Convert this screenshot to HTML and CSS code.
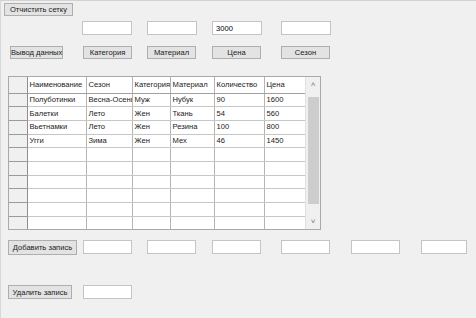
FILE: index.html
```html
<!DOCTYPE html>
<html lang="ru">
<head>
  <meta charset="UTF-8" />
  <title>Обувь</title>
  <link rel="stylesheet" href="styles.css">
</head>
<body>
  <div class="window">

    <div class="row row-clear">
      <button class="btn btn-clear">Отчистить сетку</button>
    </div>

    <div class="row row-filter">
      <input class="field f1" type="text" />
      <input class="field f2" type="text" />
      <input class="field f3" type="text" value="3000" />
      <input class="field f4" type="text" />
    </div>

    <div class="row row-buttons">
      <button class="btn btn-out">Вывод данных</button>
      <button class="btn b1">Категория</button>
      <button class="btn b2">Материал</button>
      <button class="btn b3">Цена</button>
      <button class="btn b4">Сезон</button>
    </div>

    <div class="grid">
      <div class="grid-body">
        <table>
          <thead>
            <tr>
              <th class="rh"></th>
              <th class="c-name">Наименование</th>
              <th class="c-season">Сезон</th>
              <th class="c-cat">Категория</th>
              <th class="c-mat">Материал</th>
              <th class="c-qty">Количество</th>
              <th class="c-price">Цена</th>
            </tr>
          </thead>
          <tbody id="rows"></tbody>
        </table>
      </div>
      <div class="scroll">
        <div class="arrow">&#708;</div>
        <div class="track"><div class="thumb"></div></div>
        <div class="arrow">&#709;</div>
      </div>
    </div>

    <div class="row row-add">
      <button class="btn btn-add">Добавить запись</button>
      <input class="field a1" type="text" />
      <input class="field a2" type="text" />
      <input class="field a3" type="text" />
      <input class="field a4" type="text" />
      <input class="field a5" type="text" />
      <input class="field a6" type="text" />
    </div>

    <div class="row row-del">
      <button class="btn btn-del">Удалить запись</button>
      <input class="field d1" type="text" />
    </div>

  </div>

  <script>
    const obuv = [
      ["Полуботинки", "Весна-Осень", "Муж", "Нубук", "90", "1600"],
      ["Балетки", "Лето", "Жен", "Ткань", "54", "560"],
      ["Вьетнамки", "Лето", "Жен", "Резина", "100", "800"],
      ["Угги", "Зима", "Жен", "Мех", "46", "1450"]
    ];

    const tbody = document.getElementById("rows");
    for (let i = 0; i < 10; i++) {
      const r = obuv[i] || ["", "", "", "", "", ""];
      tbody.innerHTML += `
        <tr>
          <td class="rh"></td>
          ${r.map(v => `<td>${v}</td>`).join("")}
        </tr>
      `;
    }
  </script>
</body>
</html>
```

FILE: styles.css
```css
* {
  box-sizing: border-box;
}
body {
  margin: 0;
  background: #f0f0f0;
  font-family: 'Liberation Sans', Arial, sans-serif;
  font-size: 7.6px;
  color: #1a1a1a;
}
.window {
  width: 476px;
  height: 318px;
  border-top: 1px solid #d2d2d2;
  border-left: 1px solid #d8d8d8;
  padding: 2px 0 0 3px;
}
.row {
  display: flex;
  align-items: flex-start;
}
.btn {
  font-family: inherit;
  font-size: 7.6px;
  color: #1a1a1a;
  background: #e3e3e3;
  border: 1px solid #aeaeae;
  border-radius: 0;
  padding: 0;
  height: 13px;
  line-height: 11px;
  white-space: nowrap;
}
.field {
  font-family: inherit;
  font-size: 7.6px;
  background: #fff;
  border: 1px solid #c4c4c4;
  padding: 0 3px;
  width: 50px;
  height: 14px;
  outline: none;
}

.btn-clear {
  width: 69px;
}

.row-filter {
  margin-top: 5px;
}
.f1 { margin-left: 78px; }
.f2 { margin-left: 15px; }
.f3 { margin-left: 15px; }
.f4 { margin-left: 19px; }

.row-buttons {
  margin-top: 11px;
}
.row-buttons .btn {
  width: 49px;
}
.btn-out { margin-left: 6px; width: 53px !important; }
.b1 { margin-left: 20px; }
.b2 { margin-left: 15px; }
.b3 { margin-left: 16px; }
.b4 { margin-left: 20px; }

.grid {
  margin: 17px 0 0 4px;
  width: 313px;
  height: 154px;
  display: flex;
  background: #fff;
  border: 1px solid #a9a9a9;
  overflow: hidden;
}
.grid-body {
  width: 297px;
  overflow: hidden;
}
table {
  border-collapse: collapse;
  table-layout: fixed;
  width: 297px;
}
th, td {
  text-align: left;
  font-weight: normal;
  padding: 0 2px;
  height: 13.7px;
  line-height: 12px;
  white-space: nowrap;
  overflow: hidden;
  border-right: 1px solid #b5b5b5;
  border-bottom: 1px solid #c6c6c6;
}
th {
  height: 16px;
  border-bottom: 1px solid #a0a0a0;
}
.rh {
  width: 18px;
  background: #f0f0f0;
  border-right: 1px solid #8e8e8e;
  border-bottom: 1px solid #9a9a9a;
}
.c-name { width: 59px; }
.c-season { width: 46px; }
.c-cat { width: 38px; }
.c-mat { width: 44px; }
.c-qty { width: 50px; }
.c-price { width: 42px; }

.scroll {
  width: 15px;
  flex: none;
  background: #f0f0f0;
  border-left: 1px solid #e0e0e0;
  display: flex;
  flex-direction: column;
}
.arrow {
  height: 15px;
  text-align: center;
  font-size: 8px;
  line-height: 15px;
  color: #777;
}
.track {
  flex: 1;
  padding: 5px 1px 10px 2px;
}
.thumb {
  height: 100%;
  background: #cdcdcd;
}

.row-add {
  margin-top: 10px;
}
.btn-add {
  margin-left: 4px;
  width: 69px;
  height: 15px;
}
.row-add .field {
  width: 49px;
}
.a1 { margin-left: 6px; }
.a2 { margin-left: 15px; }
.a3 { margin-left: 16px; }
.a4 { margin-left: 20px; }
.a5 { margin-left: 21px; }
.a6 { margin-left: 21px; width: 46px !important; }

.row-del {
  margin-top: 30px;
}
.btn-del {
  margin-left: 4px;
  width: 64px;
  height: 14px;
}
.d1 {
  margin-left: 11px;
  width: 49px;
}
```
